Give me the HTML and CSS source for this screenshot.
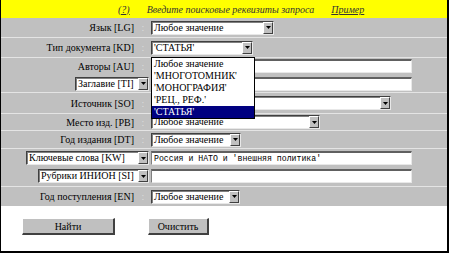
FILE: index.html
```html
<!DOCTYPE html>
<html lang="ru">
<head>
<meta charset="utf-8">
<link rel="stylesheet" href="styles.css">
</head>
<body>
<div class="page">
  <div class="hdr">
    <a class="help">(?)</a>
    <span class="hint">Введите поисковые реквизиты запроса</span>
    <a class="example">Пример</a>
  </div>

  <div class="form">
    <div class="row r-lg">
      <div class="lbl">Язык [LG]</div><div class="colon">:</div>
      <div class="fld"><div class="sel w-lg"><span class="val">Любое значение</span><span class="btn"><svg width="5" height="3" viewBox="0 0 5 3"><path d="M0 0H5L2.5 3Z" fill="#000"/></svg></span></div></div>
    </div>
    <div class="row r-kd">
      <div class="lbl">Тип документа [KD]</div><div class="colon">:</div>
      <div class="fld"><div class="sel w-kd"><span class="val">'СТАТЬЯ'</span><span class="btn"><svg width="5" height="3" viewBox="0 0 5 3"><path d="M0 0H5L2.5 3Z" fill="#000"/></svg></span></div></div>
    </div>
    <div class="row r-au">
      <div class="sub s-au">
        <div class="lbl">Авторы [AU]</div><div class="colon">:</div>
        <div class="fld"><div class="inp"></div></div>
      </div>
      <div class="sub s-ti">
        <div class="lsel"><div class="sel w-ti"><span class="val">Заглавие [TI]</span><span class="btn"><svg width="5" height="3" viewBox="0 0 5 3"><path d="M0 0H5L2.5 3Z" fill="#000"/></svg></span></div></div>
        <div class="fld"><div class="inp"></div></div>
      </div>
    </div>
    <div class="row r-so">
      <div class="lbl">Источник [SO]</div><div class="colon">:</div>
      <div class="fld"><div class="sel w-so"><span class="val"></span><span class="btn"><svg width="5" height="3" viewBox="0 0 5 3"><path d="M0 0H5L2.5 3Z" fill="#000"/></svg></span></div></div>
    </div>
    <div class="row r-pb">
      <div class="lbl">Место изд. [PB]</div><div class="colon">:</div>
      <div class="fld"><div class="sel w-pb"><span class="val">Любое значение</span><span class="btn"><svg width="5" height="3" viewBox="0 0 5 3"><path d="M0 0H5L2.5 3Z" fill="#000"/></svg></span></div></div>
    </div>
    <div class="row r-dt">
      <div class="lbl">Год издания [DT]</div><div class="colon">:</div>
      <div class="fld"><div class="sel w-dt"><span class="val">Любое значение</span><span class="btn"><svg width="5" height="3" viewBox="0 0 5 3"><path d="M0 0H5L2.5 3Z" fill="#000"/></svg></span></div></div>
    </div>
    <div class="row r-kw">
      <div class="sub s-kw">
        <div class="lsel"><div class="sel w-kw"><span class="val">Ключевые слова [KW]</span><span class="btn"><svg width="5" height="3" viewBox="0 0 5 3"><path d="M0 0H5L2.5 3Z" fill="#000"/></svg></span></div></div>
        <div class="fld"><div class="inp mono">Россия и НАТО и 'внешняя политика'</div></div>
      </div>
      <div class="sub s-si">
        <div class="lsel"><div class="sel w-si"><span class="val">Рубрики ИНИОН [SI]</span><span class="btn"><svg width="5" height="3" viewBox="0 0 5 3"><path d="M0 0H5L2.5 3Z" fill="#000"/></svg></span></div></div>
        <div class="fld"><div class="inp"></div></div>
      </div>
    </div>
    <div class="row r-en">
      <div class="lbl">Год поступления [EN]</div><div class="colon">:</div>
      <div class="fld"><div class="sel w-en"><span class="val">Любое значение</span><span class="btn"><svg width="5" height="3" viewBox="0 0 5 3"><path d="M0 0H5L2.5 3Z" fill="#000"/></svg></span></div></div>
    </div>
  </div>

  <div class="actions">
    <button class="pbtn b-find">Найти</button>
    <button class="pbtn b-clear">Очистить</button>
  </div>

  <ul class="list">
    <li>Любое значение</li>
    <li>'МНОГОТОМНИК'</li>
    <li>'МОНОГРАФИЯ'</li>
    <li>'РЕЦ., РЕФ.'</li>
    <li class="on">'СТАТЬЯ'</li>
  </ul>
</div>
</body>
</html>
```

FILE: styles.css
```css
* { box-sizing: border-box; }
html, body { margin: 0; padding: 0; background: #fff; }
body { font-family: "Liberation Serif", "Times New Roman", serif; font-size: 10px; color: #000; }

.page {
  position: relative;
  width: 449px;
  height: 253px;
  border-left: 1px solid #000;
  border-right: 2px solid #000;
  border-bottom: 2px solid #000;
  background: #fff;
  overflow: hidden;
}

.hdr {
  height: 18px;
  background: #ffff00;
  display: flex;
  align-items: center;
  font-style: italic;
  font-size: 10px;
  color: #333;
}
.hdr .help { margin-left: 117px; text-decoration: underline; }
.hdr .hint { margin-left: 17px; }
.hdr .example { margin-left: 17px; text-decoration: underline; }

.form { background: #c0c0c0; }

.row, .sub {
  display: grid;
  grid-template-columns: 133px 17px 1fr;
  align-items: center;
}
.row + .row { border-top: 1px solid #e4e4e4; }
.r-au, .r-kw { display: flex; flex-direction: column; align-items: stretch; }

.r-lg { height: 19px; }
.r-kd { height: 20px; }
.r-au { height: 35px; padding-top: 1px; gap: 3px; }
.r-so { height: 21px; }
.r-pb { height: 17px; }
.r-dt { height: 18px; }
.r-kw { height: 38px; padding-top: 2px; gap: 4px; }
.r-en { height: 20px; }

.sub { height: 14px; }
.s-ti { height: 15px; }

.lbl { text-align: right; white-space: nowrap; }
.colon { text-align: center; color: #dcdcdc; padding-left: 1px; }
.fld { display: flex; }

.lsel { grid-column: 1 / 3; display: flex; justify-content: flex-end; padding-right: 2px; }

.sel {
  height: 14px;
  display: flex;
  background: #fff;
  border-top: 1px solid #404040;
  border-left: 1px solid #404040;
  border-right: 1px solid #e8e8e8;
  border-bottom: 1px solid #e8e8e8;
  box-shadow: inset 1px 1px 0 #808080;
}
.sel .val {
  flex: 1;
  padding-left: 2px;
  line-height: 12px;
  white-space: nowrap;
  overflow: hidden;
}
.sel .btn {
  width: 10px;
  height: 12px;
  background: #c0c0c0;
  border-top: 1px solid #fff;
  border-left: 1px solid #fff;
  border-right: 1px solid #404040;
  border-bottom: 1px solid #404040;
  display: flex;
  align-items: center;
  justify-content: center;
}
.sel .btn svg { display: block; }

.w-lg { width: 123px; }
.w-kd { width: 102px; }
.w-so { width: 240px; }
.w-pb { width: 169px; }
.w-dt { width: 90px; }
.w-en { width: 89px; }
.w-ti { width: 74px; }
.w-kw { width: 123px; }
.w-si { width: 111px; }

.inp {
  width: 261px;
  height: 14px;
  background: #fff;
  border-top: 2px solid #606060;
  border-left: 1px solid #808080;
  border-right: 1px solid #e8e8e8;
  border-bottom: 1px solid #e8e8e8;
  padding-left: 2px;
  line-height: 11px;
  white-space: nowrap;
  overflow: hidden;
}
.mono { font-family: "Liberation Mono", "Courier New", monospace; font-size: 8.2px; }

.actions {
  display: flex;
  padding-top: 12px;
}
.pbtn {
  height: 17px;
  padding: 0;
  margin: 0;
  font-family: "Liberation Serif", "Times New Roman", serif;
  font-size: 10px;
  color: #000;
  background: #c0c0c0;
  border-top: 1px solid #fff;
  border-left: 1px solid #fff;
  border-right: 2px solid #404040;
  border-bottom: 2px solid #404040;
  line-height: 13px;
}
.b-find { width: 93px; margin-left: 21px; }
.b-clear { width: 61px; margin-left: 33px; }

.list {
  position: absolute;
  left: 150px;
  top: 57px;
  width: 104px;
  margin: 0;
  padding: 0;
  list-style: none;
  background: #fff;
  border: 1px solid #000;
}
.list li {
  height: 12px;
  line-height: 12px;
  padding-left: 2px;
  white-space: nowrap;
}
.list li.on { background: #000080; color: #fff; }
```
